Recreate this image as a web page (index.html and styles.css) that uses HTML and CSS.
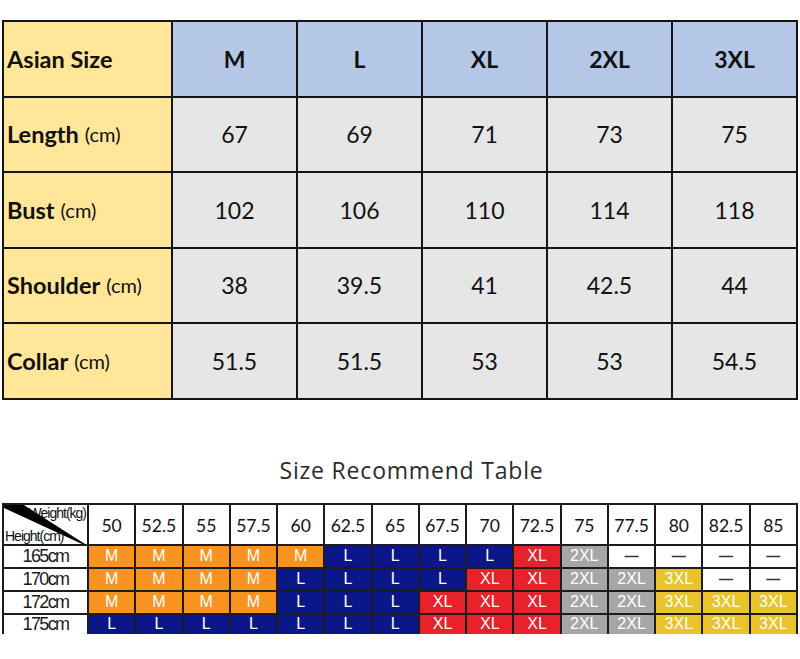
FILE: index.html
```html
<!DOCTYPE html>
<html lang="en">
<head>
<meta charset="utf-8">
<title>Size Chart</title>
<link rel="stylesheet" href="styles.css">
</head>
<body>
<div class="size-table">
  <div class="cell label">Asian Size</div>
  <div class="cell head">M</div>
  <div class="cell head">L</div>
  <div class="cell head">XL</div>
  <div class="cell head">2XL</div>
  <div class="cell head">3XL</div>

  <div class="cell label">Length <span class="unit">(cm)</span></div>
  <div class="cell val">67</div>
  <div class="cell val">69</div>
  <div class="cell val">71</div>
  <div class="cell val">73</div>
  <div class="cell val">75</div>

  <div class="cell label">Bust <span class="unit">(cm)</span></div>
  <div class="cell val">102</div>
  <div class="cell val">106</div>
  <div class="cell val">110</div>
  <div class="cell val">114</div>
  <div class="cell val">118</div>

  <div class="cell label">Shoulder <span class="unit">(cm)</span></div>
  <div class="cell val">38</div>
  <div class="cell val">39.5</div>
  <div class="cell val">41</div>
  <div class="cell val">42.5</div>
  <div class="cell val">44</div>

  <div class="cell label">Collar <span class="unit">(cm)</span></div>
  <div class="cell val">51.5</div>
  <div class="cell val">51.5</div>
  <div class="cell val">53</div>
  <div class="cell val">53</div>
  <div class="cell val">54.5</div>
</div>

<h2 class="rec-title">Size Recommend Table</h2>

<div class="rec-table">
  <div class="rc corner">
    <svg class="diag" viewBox="0 0 84 39" preserveAspectRatio="none" aria-hidden="true"><polygon points="0,0 20,0 82,39 79,39 0,3" fill="#000"/></svg>
    <span class="wt">Weight(kg)</span>
    <span class="ht">Height(cm)</span>
  </div>
  <div class="rc wh">50</div><div class="rc wh">52.5</div><div class="rc wh">55</div><div class="rc wh">57.5</div><div class="rc wh">60</div><div class="rc wh">62.5</div><div class="rc wh">65</div><div class="rc wh">67.5</div><div class="rc wh">70</div><div class="rc wh">72.5</div><div class="rc wh">75</div><div class="rc wh">77.5</div><div class="rc wh">80</div><div class="rc wh">82.5</div><div class="rc wh">85</div>

  <div class="rc hl">165cm</div>
  <div class="rc s m">M</div><div class="rc s m">M</div><div class="rc s m">M</div><div class="rc s m">M</div><div class="rc s m">M</div><div class="rc s l">L</div><div class="rc s l">L</div><div class="rc s l">L</div><div class="rc s l">L</div><div class="rc s xl">XL</div><div class="rc s xxl">2XL</div><div class="rc s na">—</div><div class="rc s na">—</div><div class="rc s na">—</div><div class="rc s na">—</div>

  <div class="rc hl">170cm</div>
  <div class="rc s m">M</div><div class="rc s m">M</div><div class="rc s m">M</div><div class="rc s m">M</div><div class="rc s l">L</div><div class="rc s l">L</div><div class="rc s l">L</div><div class="rc s l">L</div><div class="rc s xl">XL</div><div class="rc s xl">XL</div><div class="rc s xxl">2XL</div><div class="rc s xxl">2XL</div><div class="rc s x3">3XL</div><div class="rc s na">—</div><div class="rc s na">—</div>

  <div class="rc hl">172cm</div>
  <div class="rc s m">M</div><div class="rc s m">M</div><div class="rc s m">M</div><div class="rc s m">M</div><div class="rc s l">L</div><div class="rc s l">L</div><div class="rc s l">L</div><div class="rc s xl">XL</div><div class="rc s xl">XL</div><div class="rc s xl">XL</div><div class="rc s xxl">2XL</div><div class="rc s xxl">2XL</div><div class="rc s x3">3XL</div><div class="rc s x3">3XL</div><div class="rc s x3">3XL</div>

  <div class="rc hl">175cm</div>
  <div class="rc s l">L</div><div class="rc s l">L</div><div class="rc s l">L</div><div class="rc s l">L</div><div class="rc s l">L</div><div class="rc s l">L</div><div class="rc s l">L</div><div class="rc s xl">XL</div><div class="rc s xl">XL</div><div class="rc s xl">XL</div><div class="rc s xxl">2XL</div><div class="rc s xxl">2XL</div><div class="rc s x3">3XL</div><div class="rc s x3">3XL</div><div class="rc s x3">3XL</div>
</div>
</body>
</html>
```

FILE: styles.css
```css
html, body {
  margin: 0;
  padding: 0;
  background: #fff;
}
body {
  width: 800px;
  height: 659px;
  overflow: hidden;
  font-family: Lato, "Open Sans", sans-serif;
  color: #111;
}

/* ---------- top measurement table ---------- */
.size-table {
  margin: 20px 2px 0;
  width: 796px;
  box-sizing: border-box;
  padding: 2px;
  background: #141414;
  display: grid;
  grid-template-columns: 167px repeat(5, 1fr);
  grid-template-rows: repeat(5, 73.5px);
  gap: 2px;
}
.cell {
  display: flex;
  align-items: center;
  justify-content: center;
  font-size: 23px;
}
.cell.label {
  background: #FFE699;
  justify-content: flex-start;
  padding-left: 3px;
  font-weight: 700;
  font-size: 23.5px;
  white-space: nowrap;
}
.unit {
  font-weight: 400;
  font-size: 20px;
  margin-left: 6px;
}
.cell.head {
  background: #B4C7E7;
  font-weight: 700;
  font-size: 23px;
}
.cell.val {
  background: #E7E6E6;
}

/* ---------- title ---------- */
.rec-title {
  margin: 0;
  height: 103px;
  box-sizing: border-box;
  padding: 55px 0 18px 23px;
  line-height: 30px;
  text-align: center;
  font-family: "Open Sans", sans-serif;
  font-weight: 400;
  font-size: 23px;
  letter-spacing: 0.8px;
  color: #2a2a2a;
}

/* ---------- recommend table ---------- */
.rec-table {
  margin: 0 2px;
  width: 796px;
  box-sizing: border-box;
  padding: 2px 2px 0;
  background: #1c1c1c;
  display: grid;
  grid-template-columns: 83px repeat(15, 1fr);
  grid-template-rows: 39px 21px 21px 21px 19px;
  gap: 2px;
}
.rc {
  display: flex;
  align-items: center;
  justify-content: center;
  font-family: "Liberation Sans", Arial, sans-serif;
  background: #fff;
  overflow: hidden;
  white-space: nowrap;
}
.rc.wh {
  font-family: Lato, sans-serif;
  font-size: 17.5px;
  color: #111;
  padding-top: 2px;
}
.rc.corner {
  position: relative;
  flex-direction: column;
  align-items: stretch;
  justify-content: space-between;
  font-size: 14px;
  letter-spacing: -1px;
  color: #111;
  padding: 0 0 0 1px;
}
.diag {
  position: absolute;
  left: 0;
  top: 0;
  width: 100%;
  height: 100%;
}
.wt {
  position: relative;
  align-self: flex-end;
  line-height: 16px;
  padding-right: 1px;
}
.ht {
  position: relative;
  align-self: flex-start;
  line-height: 16px;
}
.rc.hl {
  font-size: 18px;
  letter-spacing: -1.6px;
  color: #1a1a1a;
}
.rc.s {
  color: #fff;
  font-size: 16px;
}
.rc.m { background: #F7931E; }
.rc.l { background: #0B1789; }
.rc.xl { background: #E8222A; }
.rc.xxl { background: #A6A6A6; }
.rc.x3 { background: #E9C32C; }
.rc.na {
  color: #333;
  font-weight: 700;
  font-size: 14px;
}
```
